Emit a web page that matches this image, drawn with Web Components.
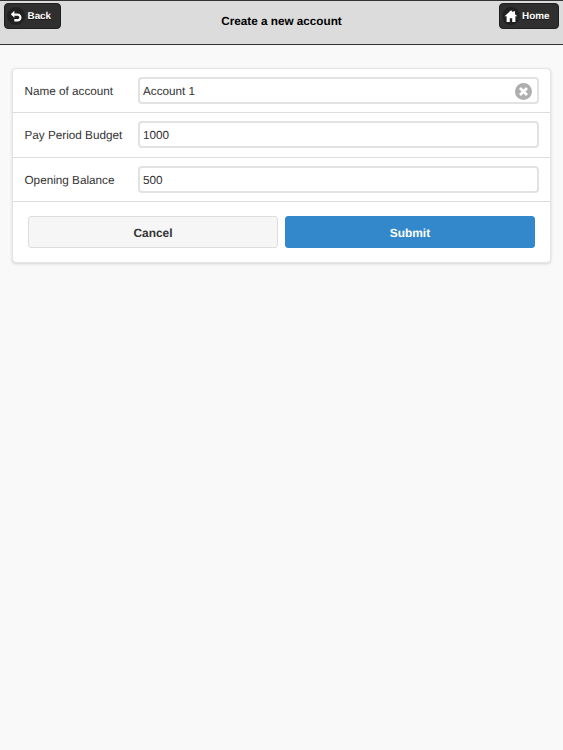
<!DOCTYPE html>
<html><head><meta charset="utf-8"><title>Create a new account</title>
<style>
html,body{margin:0;padding:0;height:100%}
body{background:#f9f9f9;font-family:"Liberation Sans",Arial,sans-serif;color:#333;text-rendering:geometricPrecision}
</style></head>
<body>
<app-header>
  <nav-button slot="left" icon="back">Back</nav-button>
  Create a new account
  <nav-button slot="right" icon="home">Home</nav-button>
</app-header>
<form-card>
  <form-row label="Name of account" value="Account 1" clearable></form-row>
  <form-row label="Pay Period Budget" value="1000"></form-row>
  <form-row label="Opening Balance" value="500"></form-row>
  <form-actions>
    <action-button>Cancel</action-button>
    <action-button primary>Submit</action-button>
  </form-actions>
</form-card>
<script>
function def(name, html, init){
  customElements.define(name, class extends HTMLElement{
    constructor(){super();this.attachShadow({mode:'open'}).innerHTML=html;}
    connectedCallback(){init&&init(this);}
  });
}
def('app-header',`<style>
:host{display:grid;grid-template-columns:1fr auto 1fr;align-items:start;height:45px;box-sizing:border-box;background:#dcdcdc;border-top:1px solid #333;border-bottom:1px solid #333;padding:2px 4px 0;}
.t{font-weight:700;font-size:11.730px;color:#000;line-height:37px;white-space:nowrap;}
.r{justify-self:end}
</style><div><slot name="left"></slot></div><div class="t"><slot></slot></div><div class="r"><slot name="right"></slot></div>`);
const icons={
 back:'<path d="M5.400 1.800 1.800 5.300l3.600 3.400V6.700h2.900c1.300 0 2 .7 2 1.700s-.8 1.700-2 1.700H5.300v2.300h3.100c2.600 0 4.100-1.700 4.100-4s-1.600-4-4.200-4H5.400z" fill="#fff"/>',
 home:'<path d="M7 1.200.6 7.300h2V13h3.200V9.200h2.400V13h3.200V7.300h2L11 5.200V2.200H9.300v1.400z" fill="#fff"/>'
};
def('nav-button',`<style>
:host{display:inline-flex;align-items:center;box-sizing:border-box;height:26px;background:#2f2f2f;border:1px solid #1f1f1f;border-radius:4px;color:#fff;font-weight:700;font-size:9.900px;padding:0 8.500px 0 2px;gap:2.500px;text-shadow:0 1px 0 #111;}
.i{width:18px;height:18px;border-radius:50%;background:#202020;display:flex;align-items:center;justify-content:center}
svg{width:14px;height:14px}
</style><span class="i"><svg viewBox="0 0 14 14"></svg></span><slot></slot>`,el=>{
  el.shadowRoot.querySelector('svg').innerHTML=icons[el.getAttribute('icon')];
});
def('form-card',`<style>
:host{display:block;box-sizing:border-box;margin:23px 12px 0 12px;width:539px;height:195px;background:#fff;border:1px solid #e4e4e4;border-radius:4px;box-shadow:0 1px 3px rgba(0,0,0,.15);}
</style><slot></slot>`);
def('form-row',`<style>
:host{display:flex;align-items:center;box-sizing:border-box;height:44.300px;border-bottom:1px solid #ddd;padding:0 11px 0 11.500px;font-size:11.730px;color:#333}
label{width:113.500px;flex:none;white-space:nowrap;padding-top:2px}
.f{flex:1;position:relative;display:flex}
input{flex:1;min-width:0;box-sizing:border-box;height:27px;border:2px solid #e2e2e2;border-radius:4px;background:#fff;padding:2px 3px 0;margin:0;font:11.730px "Liberation Sans",Arial,sans-serif;color:#333;outline:none;text-rendering:geometricPrecision}
svg{position:absolute;right:7px;top:5.500px;width:17px;height:17px}
</style><label></label><div class="f"><input type="text"></div>`,el=>{
  const s=el.shadowRoot;
  s.querySelector('label').textContent=el.getAttribute('label');
  s.querySelector('input').setAttribute('value',el.getAttribute('value'));
  if(el.hasAttribute('clearable')){
    s.querySelector('.f').insertAdjacentHTML('beforeend','<svg viewBox="0 0 17 17"><circle cx="8.500" cy="8.500" r="8.500" fill="#aeaeae"/><path d="M5 5l7 7M12 5l-7 7" stroke="#fff" stroke-width="2.800"/></svg>');
  }
});
def('form-actions',`<style>
:host{display:flex;gap:7px;padding:14px 15px 0 15px}
</style><slot></slot>`);
def('action-button',`<style>
:host{flex:1;display:flex;align-items:center;justify-content:center;box-sizing:border-box;height:32px;padding-top:2px;border-radius:3px;font-weight:700;font-size:11.900px;background:#f6f6f6;border:1px solid #dedede;color:#333}
:host([primary]){background:#3388cc;border-color:#3388cc;color:#fff}
</style><slot></slot>`);
</script>
</body></html>
